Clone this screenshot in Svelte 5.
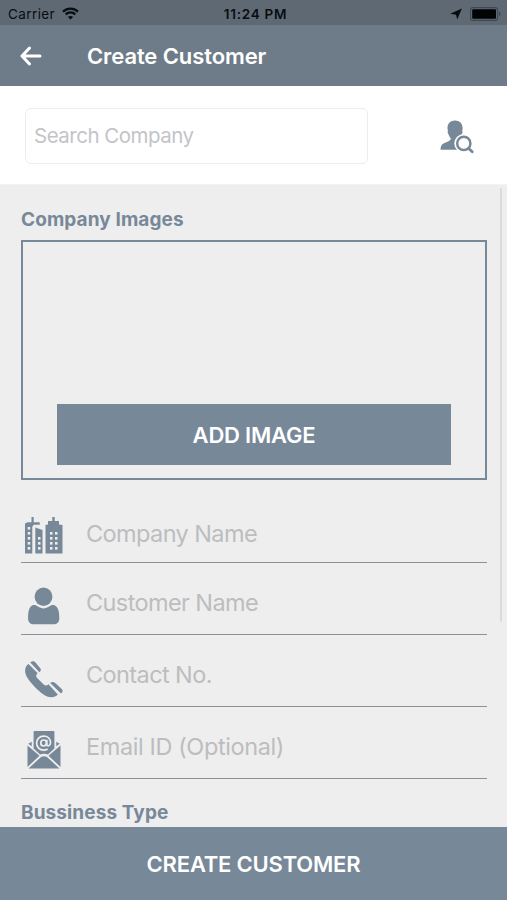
<script lang="ts">
   let company = $state('');

   const fields = [
      { icon: 'buildings', label: 'Company Name', type: 'text' },
      { icon: 'person', label: 'Customer Name', type: 'text' },
      { icon: 'phone', label: 'Contact No.', type: 'tel' },
      { icon: 'mail', label: 'Email ID (Optional)', type: 'email' }
   ];
</script>

<div class="screen">
   <div class="status-bar">
      <div class="carrier">
         <span>Carrier</span>
         <svg width="17" height="13" viewBox="0 0 17 13" fill="none" stroke="#080d12" stroke-width="2.3">
            <path d="M1 4.6C5.2.5 11.8.5 16 4.6" />
            <path d="M3.7 7.4c2.7-2.6 6.900-2.600 9.600 0" />
            <path d="M8.500 12.500 5.900 9.900c1.500-1.300 3.700-1.300 5.200 0z" fill="#080d12" stroke="none" />
         </svg>
      </div>
      <span class="time">11:24 PM</span>
      <div class="indicators">
         <svg width="12" height="12" viewBox="0 0 12 12">
            <path d="M11.900.4 7.200 11.600 6 6.700.2 5.800z" fill="#080d12" />
         </svg>
         <svg width="32" height="14" viewBox="0 0 32 14">
            <rect x=".6" y=".6" width="27" height="12.800" rx="2.500" fill="none" stroke="#3e4852" stroke-width="1.100" />
            <rect x="2.200" y="2.300" width="23.800" height="9.400" rx="1" fill="#020304" />
            <path d="M29 4.800c2 .6 2 3.800 0 4.400z" fill="#3e4852" />
         </svg>
      </div>
   </div>

   <header>
      <button class="back" aria-label="Back">
         <svg width="22" height="20" viewBox="0 0 22 20" fill="none" stroke="#fff" stroke-width="3" stroke-linecap="round" stroke-linejoin="round">
            <path d="M20 10H2.500M9.500 2 2 10l7.500 8" />
         </svg>
      </button>
      <h1>Create Customer</h1>
   </header>

   <div class="search">
      <input placeholder="Search Company" bind:value={company} />
      <button aria-label="Search customer">
         <svg width="34" height="34" viewBox="0 0 34 34">
            <path d="M15 .5c4.600 0 7.600 3 7.600 7.600 0 1.200-.1 2.100-.4 3 .6.500.4 2.500-.6 3.500-.4 1.500-1.100 2.800-2 3.700v4c2 2.500 6.400 2.500 9 7.400H.5c.2-6 3-6.200 7.500-8.200 2-.9 2.800-1.600 2.800-3.200-1-.9-1.800-2.200-2.200-3.700-1-1-1.300-3-.6-3.500-.3-.9-.5-1.800-.5-3C7.500 3.500 10.400.5 15 .5z" fill="#778899" />
            <circle cx="23.800" cy="23.400" r="9.500" fill="#fff" />
            <path d="m28 28 5 5" stroke="#fff" stroke-width="5" />
            <circle cx="23.800" cy="23.400" r="6.600" fill="#fff" stroke="#778899" stroke-width="2.500" />
            <path d="m28.700 28.400 3.500 3.400" stroke="#778899" stroke-width="2.800" stroke-linecap="round" />
         </svg>
      </button>
   </div>

   <main>
      <div class="scrollbar"></div>
      <h2>Company Images</h2>
      <div class="images">
         <button class="add-image">ADD IMAGE</button>
      </div>

      {#each fields as field}
         <label class="field">
            <svg width="46" height="42" viewBox="0 0 46 42" fill="#778899">
               {#if field.icon === 'buildings'}
                  <path d="M4 39.500V9.500l2.500-1.300h4V3h2.200v5.200h6v2.600h-6l-1.400 2v26.700z" />
                  <path d="M14.300 39.500V13.500l7.200 2.500v23.500z" />
                  <path d="M24.500 39.500V11l2.500-.5V7h4.300V3h2.400v4h4.300v3.500l3.500.5v28.500z" />
                  <g fill="#eee">
                     {#each [13, 18, 23, 28, 33] as y}
                        <rect x="6.700" {y} width="2.500" height="2.600" />
                     {/each}
                     {#each [18, 23, 28, 33] as y}
                        {#if y > 18}
                           <rect x="17" {y} width="2.500" height="2.600" />
                        {/if}
                        <rect x="29" {y} width="2.500" height="2.600" />
                        <rect x="34" {y} width="2.500" height="2.600" />
                     {/each}
                  </g>
               {:else if field.icon === 'person'}
                  <ellipse cx="22.500" cy="10.800" rx="8.900" ry="9.200" />
                  <path d="M11.500 19.300c2.400-.6 3.900.2 5.400 1.300 3.600 2.400 7.600 2.400 11.200 0 1.500-1.100 3-1.900 5.400-1.300 4.500 2.200 4.800 8.200 4.800 13.200 0 3.700-2.300 5.800-5.700 5.800H12.900c-3.600 0-5.800-2.100-5.800-5.800 0-5 .2-11 4.400-13.200z" />
               {:else if field.icon === 'phone'}
                  <path d="M7.500 6C4.500 8 3.300 12 4.800 16.500c1.700 4.900 7.200 10.800 12.200 15.500 4.500 4.200 8.700 7.200 13.200 7.200 2.900 0 5-.8 6.600-2.700L27.500 26.200c-1.600 1.700-3.200 1.900-4.800.4l-6.600-6.700c-1.500-1.700-1.100-3.200.6-4.600z" />
                  <path d="M9.300 4.600c1.800-2 3.900-1.700 5.400.1l4.500 5.600c1.100 1.400.8 2.700-.8 3.900z" />
                  <path d="M29.200 24.900c1.700-1.500 3.600-1.200 5 .1l6.500 6.100c1.400 1.400 1.300 2.800-.7 4.500z" />
               {:else}
                  <path d="M13.600 1h18.800q1 0 1 1v16.400L27 24.400q-4-1.200-8 0l-6.400-6V2q0-1 1-1z" />
                  <path d="M10.700 11.700v4.500L7.300 13.700zM35.300 11.700v4.500l3.400-2.500zM6.500 15.500l12 10.200-12 11.300zM39.500 15.500l-12 10.200 12 11.300zM7.500 38.500 20 27q3-1.500 6 0l12.500 11.500z" />
                  <g fill="none" stroke="#eee" stroke-width="1.700">
                     <ellipse cx="22.600" cy="13" rx="2.800" ry="3" />
                     <path d="M25.800 9.800v4.400c0 2.500 3.700 2 3.700-1.400 0-4-2.900-6.700-6.800-6.700-4.200 0-7.100 3-7.100 7 0 4.200 3 7 7 7 1.600 0 2.800-.4 4-1.100" />
                  </g>
               {/if}
            </svg>
            <input type={field.type} placeholder={field.label} />
         </label>
      {/each}

      <h2 class="type">Bussiness Type</h2>
   </main>

   <button class="create">CREATE CUSTOMER</button>
</div>

<style>
   :global(body) {
      margin: 0;
   }

   .screen {
      width: 507px;
      height: 900px;
      display: flex;
      flex-direction: column;
      overflow: hidden;
      background: #eee;
      font-family: Inter, 'Liberation Sans', sans-serif;
   }

   button {
      padding: 0;
      border: 0;
      background: transparent;
      color: #fff;
      font: inherit;
      cursor: pointer;
   }

   svg {
      display: block;
      flex: none;
   }

   .status-bar {
      height: 25px;
      flex: none;
      display: grid;
      grid-template-columns: 1fr auto 1fr;
      align-items: center;
      padding: 2px 4px 0 8px;
      box-sizing: border-box;
      background: #5e6974;
      color: #080d12;
      font-size: 13.5px;
   }

   .carrier {
      display: flex;
      align-items: center;
      gap: 7px;
      letter-spacing: 0.4px;
   }

   .time {
      font-weight: 600;
      font-size: 13.5px;
      letter-spacing: 0.75px;
   }

   .indicators {
      display: flex;
      align-items: center;
      justify-content: flex-end;
      gap: 8px;
      margin-right: 1px;
   }

   header {
      height: 61px;
      flex: none;
      display: flex;
      align-items: center;
      padding-left: 20px;
      background: #6e7b88;
   }

   .back {
      width: 67px;
   }

   h1 {
      margin: 0;
      color: #fff;
      font-size: 22px;
      font-weight: 600;
      letter-spacing: -0.1px;
   }

   .search {
      height: 98px;
      flex: none;
      display: flex;
      align-items: center;
      justify-content: space-between;
      padding: 2px 33px 0 25px;
      box-sizing: border-box;
      background: #fff;
   }

   .search input {
      width: 343px;
      height: 56px;
      box-sizing: border-box;
      padding: 0 9px 1px 8px;
      border: 1px solid #ececee;
      border-radius: 6px;
      font-size: 20.5px;
      letter-spacing: -0.5px;
   }

   .search button {
      padding-top: 2px;
   }

   input {
      font-family: inherit;
      outline: 0;
      color: #778899;
   }

   input::placeholder {
      color: #c3c4c7;
      opacity: 1;
   }

   main {
      position: relative;
      flex: 1;
      min-height: 0;
      overflow: hidden;
      padding: 23px 20px 0 21px;
      border-top: 1px solid #f3f3f4;
   }

   .scrollbar {
      position: absolute;
      top: 3px;
      right: 5px;
      width: 2px;
      height: 434px;
      border-radius: 1px;
      background: #d9dadb;
   }

   h2 {
      margin: 0;
      color: #778899;
      font-size: 19px;
      font-weight: 650;
      line-height: 24px;
      letter-spacing: 0.1px;
   }

   .images {
      height: 240px;
      box-sizing: border-box;
      display: flex;
      align-items: flex-end;
      justify-content: center;
      margin-top: 8px;
      padding-bottom: 13px;
      border: 2px solid #778899;
   }

   .add-image {
      width: 394px;
      height: 61px;
      background: #778899;
      font-size: 22px;
      font-weight: 600;
      letter-spacing: -0.2px;
   }

   .field {
      height: 72px;
      box-sizing: border-box;
      display: flex;
      align-items: center;
      padding-top: 8px;
      border-bottom: 1.5px solid #8c9297;
   }

   .field svg {
      margin-top: 9px;
   }

   .images + .field {
      height: 76px;
      margin-top: 7px;
      padding-top: 18px;
   }

   .images + .field svg {
      margin-top: 2px;
   }

   .field input {
      flex: 1;
      min-width: 0;
      height: 40px;
      padding: 0;
      margin-left: 19px;
      border: 0;
      background: transparent;
      font-size: 23.5px;
      letter-spacing: -0.6px;
   }

   .field input::placeholder {
      color: #bcbdbf;
   }

   .field input[type='email'] {
      letter-spacing: -0.4px;
   }

   .type {
      margin-top: 22px;
   }

   .create {
      height: 73px;
      flex: none;
      background: #778899;
      font-size: 22px;
      font-weight: 600;
      letter-spacing: -0.2px;
   }
</style>
